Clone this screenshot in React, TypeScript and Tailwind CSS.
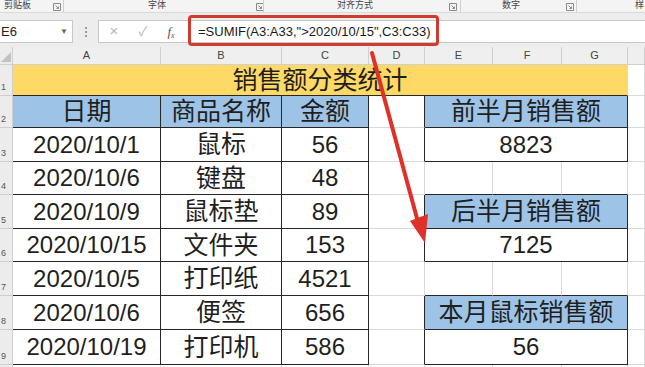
import React from 'react';

interface Cell {
  t?: string;
  span?: number;
  bg?: string;
  r?: boolean; // dark right border
  b?: boolean; // dark bottom border
  big?: boolean;
}

const DARK_R = 'border-r-[#262626]';
const LITE_R = 'border-r-[#d9d9d9]';
const DARK_B = 'border-b-[#262626]';
const LITE_B = 'border-b-[#d9d9d9]';
const YELLOW = 'bg-[#ffd966]';
const BLUE = 'bg-[#9dc3e6]';

const tableRow = (date: string, name: string, amount: string): Cell[] => [
  { t: date, r: true, b: true },
  { t: name, r: true, b: true, big: true },
  { t: amount, r: true, b: true },
];

const rows: Cell[][] = [
  [{ t: '销售额分类统计', span: 7, bg: YELLOW, b: true, big: true }, {}],
  [
    { t: '日期', bg: BLUE, r: true, b: true, big: true },
    { t: '商品名称', bg: BLUE, r: true, b: true, big: true },
    { t: '金额', bg: BLUE, r: true, b: true, big: true },
    { r: true },
    { t: '前半月销售额', span: 3, bg: BLUE, r: true, b: true, big: true },
    {},
  ],
  [...tableRow('2020/10/1', '鼠标', '56'), { r: true }, { t: '8823', span: 3, r: true, b: true }, {}],
  [...tableRow('2020/10/6', '键盘', '48'), {}, { b: true }, { b: true }, { b: true }, {}],
  [...tableRow('2020/10/9', '鼠标垫', '89'), { r: true }, { t: '后半月销售额', span: 3, bg: BLUE, r: true, b: true, big: true }, {}],
  [...tableRow('2020/10/15', '文件夹', '153'), { r: true }, { t: '7125', span: 3, r: true, b: true }, {}],
  [...tableRow('2020/10/5', '打印纸', '4521'), {}, { b: true }, { b: true }, { b: true }, {}],
  [...tableRow('2020/10/6', '便签', '656'), { r: true }, { t: '本月鼠标销售额', span: 3, bg: BLUE, r: true, b: true, big: true }, {}],
  [...tableRow('2020/10/19', '打印机', '586'), { r: true }, { t: '56', span: 3, r: true, b: true }, {}],
  [{}, {}, {}, {}, {}, {}, {}, {}],
];

const spanCls = (n?: number) => (n === 7 ? 'col-span-7' : n === 3 ? 'col-span-3' : '');

const Launcher = () => (
  <svg width="8" height="8" viewBox="0 0 8 8" className="shrink-0">
    <path d="M0.5 0.5h7v7h-7z" fill="none" stroke="#8a8a8a" strokeWidth="1" />
    <path d="M2.5 2.5l3 3M5.5 3.5v2h-2" fill="none" stroke="#8a8a8a" strokeWidth="1" />
  </svg>
);

const App = () => {
  const cols = ['A', 'B', 'C', 'D', 'E', 'F', 'G', ''];
  return (
    <div className="relative w-[645px] h-[367px] overflow-hidden bg-white font-['Liberation_Sans','Noto_Sans_CJK_SC',sans-serif] text-[#1f1f1f]">
      {/* ribbon group labels */}
      <div className="relative h-[13px] bg-[#f4f4f4] border-b border-[#dadada] overflow-hidden text-[9px] leading-none text-[#444]">
        <span className="absolute left-[4px] top-[1px]">剪贴板</span>
        <span className="absolute left-[53px] top-[3px]"><Launcher /></span>
        <span className="absolute left-[63px] top-0 h-[12px] w-px bg-[#cfcfcf]" />
        <span className="absolute left-[148px] top-[1px]">字体</span>
        <span className="absolute left-[256px] top-[3px]"><Launcher /></span>
        <span className="absolute left-[263px] top-0 h-[12px] w-px bg-[#cfcfcf]" />
        <span className="absolute left-[337px] top-[1px]">对齐方式</span>
        <span className="absolute left-[449px] top-[3px]"><Launcher /></span>
        <span className="absolute left-[460px] top-0 h-[12px] w-px bg-[#cfcfcf]" />
        <span className="absolute left-[502px] top-[1px]">数字</span>
        <span className="absolute left-[566px] top-[3px]"><Launcher /></span>
        <span className="absolute left-[576px] top-0 h-[12px] w-px bg-[#cfcfcf]" />
        <span className="absolute left-[635px] top-[1px]">样</span>
      </div>

      {/* formula bar */}
      <div className="h-[34px] bg-[#ededed] flex items-start pt-[7px]">
        <div className="w-[73px] h-[23px] bg-white border border-[#c8c8c8] border-l-0 flex items-center justify-between pl-[1px] pr-[4px]">
          <span className="text-[13px] text-[#222]">E6</span>
          <span className="text-[8px] text-[#666]">▼</span>
        </div>
        <div className="w-[25px] h-[23px] flex flex-col items-center justify-center gap-[2px]">
          <span className="w-[2px] h-[2px] bg-[#9a9a9a]" />
          <span className="w-[2px] h-[2px] bg-[#9a9a9a]" />
          <span className="w-[2px] h-[2px] bg-[#9a9a9a]" />
        </div>
        <div className="flex-1 h-[23px] bg-white border border-[#c8c8c8] border-r-0 flex items-center">
          <span className="w-[30px] text-center text-[15px] text-[#b5b5b5]">×</span>
          <span className="w-[28px] text-center text-[13px] text-[#b5b5b5]">✓</span>
          <span className="w-[28px] text-center text-[13px] italic font-['Liberation_Serif',serif] text-[#555]">f<sub className="text-[8px]">x</sub></span>
          <span className="ml-[13px] text-[13px] text-[#1a1a1a] whitespace-nowrap">=SUMIF(A3:A33,"&gt;2020/10/15",C3:C33)</span>
        </div>
      </div>

      {/* sheet grid */}
      <div className="grid grid-cols-[13px_148px_121px_87px_56px_68px_69px_66px_17px] grid-rows-[18px_31px_32px_34px_33px_34px_33px_34px_34px_35px_20px]">
        <div className="relative bg-[#ececec] border-r border-b border-[#cfcfcf]">
          <svg width="10" height="10" viewBox="0 0 10 10" className="absolute right-[1px] bottom-[2px]">
            <path d="M10 0V10H0z" fill="#c2c2c2" />
          </svg>
        </div>
        {cols.map((c, i) => (
          <div key={i} className="bg-[#efefef] border-r border-b border-[#cfcfcf] flex items-center justify-center text-[11px] text-[#444] leading-none">
            {c}
          </div>
        ))}
        {rows.map((row, ri) => (
          <React.Fragment key={ri}>
            <div className="bg-[#ececec] border-r border-b border-[#cfcfcf] flex items-end pb-[3px] pl-[1px] text-[9px] leading-none text-[#555] overflow-hidden">
              {ri < 9 && <span>{ri + 1}</span>}
            </div>
            {row.map((c, ci) => (
              <div
                key={ci}
                className={`${spanCls(c.span)} ${c.bg ?? 'bg-white'} border-r border-b ${c.r ? DARK_R : LITE_R} ${c.b ? DARK_B : LITE_B} flex items-center justify-center whitespace-nowrap leading-none ${c.big ? 'text-[25px]' : 'text-[24px]'}`}
              >
                {c.t}
              </div>
            ))}
          </React.Fragment>
        ))}
      </div>

      {/* red highlight box around formula */}
      <div className="absolute left-[188px] top-[15px] w-[251px] h-[31px] border-[3px] border-[#d33a2f] rounded-[4px] pointer-events-none" />

      {/* red arrow */}
      <svg width="645" height="367" viewBox="0 0 645 367" className="absolute left-0 top-0 pointer-events-none">
        <line x1="372" y1="53" x2="418" y2="222" stroke="#e0302a" strokeWidth="4" strokeLinecap="round" />
        <polygon points="410,221 428,214 425,243" fill="#e0302a" />
      </svg>
    </div>
  );
};

export default App;
